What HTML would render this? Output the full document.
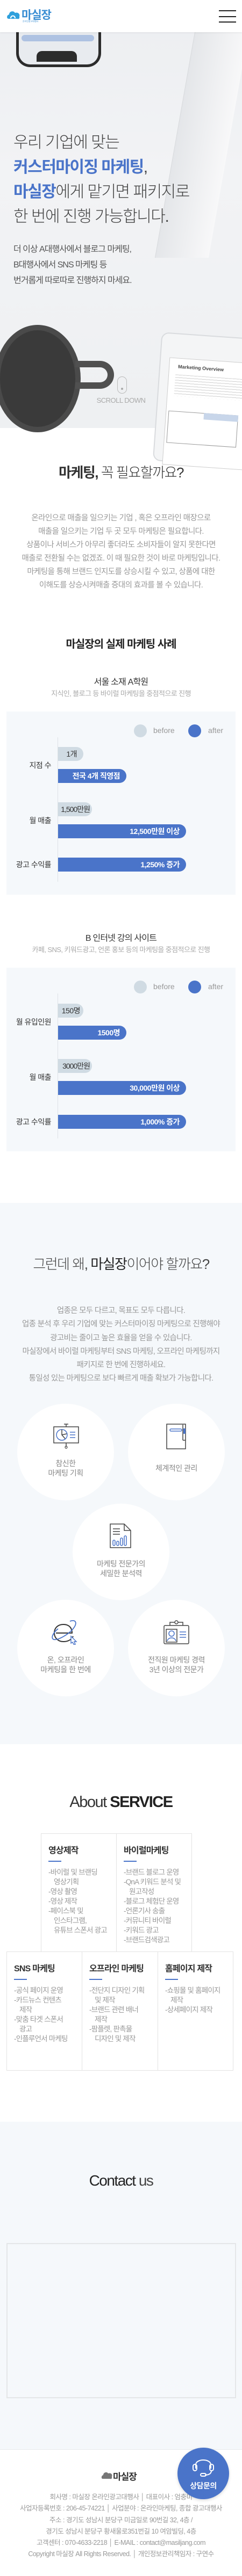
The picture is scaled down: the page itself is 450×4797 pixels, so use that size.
<!DOCTYPE html>
<html lang="ko">
<head>
<meta charset="utf-8">
<style>
*{margin:0;padding:0;box-sizing:border-box}
html,body{width:450px;height:4797px;overflow:hidden;background:#fff}
body{position:relative;font-family:"Liberation Sans","Noto Sans CJK KR",sans-serif;color:#333}
.a{position:absolute}
.c{position:absolute;left:0;width:450px;text-align:center}
.bar{position:absolute;left:108px;height:26px;border-radius:0 13px 13px 0;text-align:right;padding-right:12px;font-size:14px;line-height:26px;letter-spacing:-0.5px;white-space:nowrap}
.bf{background:#d0dbe3;color:#333}
.af{background:#4a74c9;color:#fff;font-weight:bold}
.lbl{position:absolute;width:95px;text-align:right;font-size:14px;color:#333;letter-spacing:-0.5px;white-space:nowrap}
.box{position:absolute;background:#f5f8fb}
.axis{position:absolute;left:107px;width:1px;background:#dde2e6}
.lg{position:absolute;font-size:14px;color:#999}
.dot{position:absolute;width:24px;height:24px;border-radius:50%}
.circ{position:absolute;width:180px;height:180px;border-radius:50%;background:#fff;text-align:center}
.circ .t{position:absolute;left:0;width:180px;font-size:14px;color:#888;line-height:18px;letter-spacing:-0.5px}
.circ svg{position:absolute}
.sv{position:absolute;border:1px solid #e3e3e3;background:#fff}
.sv h4{position:absolute;left:13px;font-size:16px;font-weight:bold;color:#333;letter-spacing:-0.8px;white-space:nowrap}
.sv i{position:absolute;left:13px;width:24px;height:2px;background:#4a74c9}
.sv ul{position:absolute;left:13px;list-style:none;font-size:13.5px;color:#999;line-height:18px;letter-spacing:-0.8px;white-space:nowrap}
.sv li{padding-left:7px;text-indent:-7px}
</style>
</head>
<body>

<!-- HERO BACKGROUND -->
<div class="a" style="left:0;top:0;width:450px;height:797px;background:linear-gradient(180deg,#eceef1 0%,#f2f3f5 40%,#eef0f2 100%)"></div>
<div class="a" style="left:30px;top:30px;width:158px;height:95px;border:5px solid #2c2c2c;border-top:none;border-radius:0 0 26px 26px;background:#e8ebef"></div>
<div class="a" style="left:40px;top:65px;width:135px;height:12px;background:#aec2e2;border-radius:6px"></div>
<div class="a" style="left:68px;top:95px;width:75px;height:20px;background:#2c2c2c;border-radius:10px 10px 0 0"></div>
<div class="a" style="left:362px;top:60px;width:100px;height:420px;background:linear-gradient(90deg,#e4e6e9,#f8f8f9);transform:skewX(-10deg);transform-origin:top left;border-left:1px solid #d6d8db"></div>
<div class="a" style="left:-10px;top:605px;width:160px;height:200px;border-radius:50%;background:#4a4a4a"></div>
<div class="a" style="left:0px;top:615px;width:140px;height:180px;border-radius:50%;background:#3a3a3a"></div>
<div class="a" style="left:140px;top:672px;width:72px;height:52px;border:12px solid #505050;border-left:none;border-radius:0 26px 26px 0"></div>
<div class="a" style="left:292px;top:625px;width:200px;height:240px;background:#f4f5f6;border-radius:14px;transform:rotate(4deg);border:2px solid #d9dbde">
  <div style="position:absolute;left:16px;top:44px;width:200px;height:200px;background:#fff;border:1px solid #ccc">
    <div style="position:absolute;left:16px;top:10px;font-size:9px;font-weight:bold;color:#444;font-family:'Liberation Sans',sans-serif">Marketing Overview</div>
    <div style="position:absolute;left:12px;top:30px;width:130px;height:40px;background:repeating-linear-gradient(180deg,#cfcfcf 0 1px,transparent 1px 5px)"></div>
    <div style="position:absolute;left:4px;top:98px;width:130px;height:60px;border:1px solid #999"></div>
    <div style="position:absolute;left:70px;top:98px;width:64px;height:12px;background:#c8d6ea"></div>
  </div>
</div>

<!-- HEADER -->
<div class="a" style="left:0;top:0;width:450px;height:60px;background:#fff;box-shadow:0 1px 3px rgba(0,0,0,.08)"></div>
<svg class="a" style="left:12px;top:17px" width="26" height="24" viewBox="0 0 26 24">
  <path d="M4 18 C0 18 0 11 5 10 C5 4 13 2 16 7 C21 5 26 9 24 14 C25 18 22 19 20 18 Z" fill="#2fa0dc"/>
  <path d="M8 17 C8 11 16 11 16 17" stroke="#fff" stroke-width="2" fill="none"/>
</svg>
<div class="a" style="left:40px;top:17px;font-size:21px;font-weight:bold;color:#3a8ed3;letter-spacing:-1px;line-height:24px">마실장</div>
<div class="a" style="left:42px;top:37px;font-size:4px;color:#3a8ed3">온라인광고대행사</div>
<div class="a" style="left:407px;top:19px;width:32px;height:2px;background:#222"></div>
<div class="a" style="left:407px;top:30px;width:32px;height:2px;background:#222"></div>
<div class="a" style="left:407px;top:40px;width:32px;height:2px;background:#222"></div>

<!-- HERO TEXT -->
<div class="a" style="left:25px;top:243px;font-size:30px;line-height:46px;color:#444;letter-spacing:-1.5px;font-weight:300;white-space:nowrap">
우리 기업에 맞는<br>
<span style="color:#4a74c9;font-weight:bold">커스터마이징 마케팅</span>,<br>
<span style="color:#4a74c9;font-weight:bold">마실장</span>에게 맡기면 패키지로<br>
한 번에 진행 가능합니다.
</div>
<div class="a" style="left:25px;top:450px;font-size:16px;line-height:29px;color:#555;letter-spacing:-1px;white-space:nowrap">
더 이상 A대행사에서 블로그 마케팅,<br>B대행사에서 SNS 마케팅 등<br>번거롭게 따로따로 진행하지 마세요.
</div>
<div class="a" style="left:218px;top:701px;width:18px;height:32px;border:1.5px solid #bbb;border-radius:9px"></div>
<div class="a" style="left:225px;top:722px;width:4px;height:4px;border-radius:50%;background:#aaa"></div>
<div class="c" style="top:738px;font-size:13px;color:#aaa;letter-spacing:-0.5px">SCROLL DOWN</div>

<!-- SECTION 2 -->
<div class="c" style="top:860px;font-size:26px;color:#333;letter-spacing:-1.5px;font-weight:300"><b style="font-weight:bold">마케팅,</b> 꼭 필요할까요?</div>
<div class="c" style="top:953px;font-size:14.5px;line-height:25px;color:#999;letter-spacing:-0.6px;white-space:nowrap">
온라인으로 매출을 일으키는 기업 , 혹은 오프라인 매장으로<br>
매출을 일으키는 기업 두 곳 모두 마케팅은 필요합니다.<br>
상품이나 서비스가 아무리 좋더라도 소비자들이 알지 못한다면<br>
매출로 전환될 수는 없겠죠. 이 때 필요한 것이 바로 마케팅입니다.<br>
마케팅을 통해 브랜드 인지도를 상승시킬 수 있고, 상품에 대한<br>
이해도를 상승시켜매출 증대의 효과를 볼 수 있습니다.
</div>

<div class="c" style="top:1183px;font-size:20px;font-weight:bold;color:#222;letter-spacing:-1px">마실장의 실제 마케팅 사례</div>

<!-- CASE A -->
<div class="c" style="top:1256px;font-size:16px;color:#333;letter-spacing:-0.8px">서울 소재 A학원</div>
<div class="c" style="top:1281px;font-size:13px;color:#aaa;letter-spacing:-0.6px">지식인, 블로그 등 바이럴 마케팅을 중점적으로 진행</div>
<div class="box" style="left:12px;top:1325px;width:426px;height:341px"></div>
<div class="dot" style="left:249px;top:1349px;background:#d0dbe3"></div>
<div class="lg" style="left:285px;top:1352px">before</div>
<div class="dot" style="left:350px;top:1349px;background:#4a74c9"></div>
<div class="lg" style="left:387px;top:1352px">after</div>
<div class="axis" style="top:1373px;height:269px"></div>
<div class="bar bf" style="top:1391px;width:47px">1개</div>
<div class="bar af" style="top:1432px;width:127px">전국 4개 직영점</div>
<div class="lbl" style="top:1415px">지점 수</div>
<div class="bar bf" style="top:1494px;width:63px;padding-right:4px;letter-spacing:-1px">1,500만원</div>
<div class="bar af" style="top:1535px;width:238px">12,500만원 이상</div>
<div class="lbl" style="top:1518px">월 매출</div>
<div class="bar af" style="top:1597px;width:238px">1,250% 증가</div>
<div class="lbl" style="top:1600px">광고 수익률</div>

<!-- CASE B -->
<div class="c" style="top:1733px;font-size:16px;color:#333;letter-spacing:-0.8px">B 인터넷 강의 사이트</div>
<div class="c" style="top:1758px;font-size:13px;color:#aaa;letter-spacing:-0.6px">카페, SNS, 키워드광고, 언론 홍보 등의 마케팅을 중점적으로 진행</div>
<div class="box" style="left:12px;top:1802px;width:426px;height:342px"></div>
<div class="dot" style="left:249px;top:1826px;background:#d0dbe3"></div>
<div class="lg" style="left:285px;top:1829px">before</div>
<div class="dot" style="left:350px;top:1826px;background:#4a74c9"></div>
<div class="lg" style="left:387px;top:1829px">after</div>
<div class="axis" style="top:1850px;height:270px"></div>
<div class="bar bf" style="top:1869px;width:47px;padding-right:6px">150명</div>
<div class="bar af" style="top:1910px;width:127px">1500명</div>
<div class="lbl" style="top:1893px">월 유입인원</div>
<div class="bar bf" style="top:1972px;width:63px;padding-right:4px;letter-spacing:-1px">3000만원</div>
<div class="bar af" style="top:2013px;width:238px">30,000만원 이상</div>
<div class="lbl" style="top:1996px">월 매출</div>
<div class="bar af" style="top:2076px;width:238px">1,000% 증가</div>
<div class="lbl" style="top:2079px">광고 수익률</div>

<!-- WHY SECTION -->
<div class="a" style="left:0;top:2240px;width:450px;height:1008px;background:#f5f8fb"></div>
<div class="c" style="top:2334px;font-size:26px;color:#444;letter-spacing:-1.5px;font-weight:300">그런데 왜, <b style="color:#222">마실장</b>이어야 할까요?</div>
<div class="c" style="top:2429px;font-size:14.5px;line-height:25.3px;color:#999;letter-spacing:-0.7px;white-space:nowrap">
업종은 모두 다르고, 목표도 모두 다릅니다.<br>
업종 분석 후 우리 기업에 맞는 커스터마이징 마케팅으로 진행해야<br>
광고비는 줄이고 높은 효율을 얻을 수 있습니다.<br>
마실장에서 바이럴 마케팅부터 SNS 마케팅, 오프라인 마케팅까지<br>
패키지로 한 번에 진행하세요.<br>
통일성 있는 마케팅으로 보다 빠르게 매출 확보가 가능합니다.
</div>

<div class="circ" style="left:32px;top:2614px">
  <svg style="left:66px;top:36px" width="50" height="48" viewBox="0 0 50 48">
    <line x1="25" y1="2" x2="25" y2="7" stroke="#444" stroke-width="1.5"/><line x1="21" y1="2" x2="29" y2="2" stroke="#444" stroke-width="1.5"/>
    <rect x="2" y="7" width="46" height="30" fill="none" stroke="#444" stroke-width="1.5"/>
    <line x1="25" y1="37" x2="25" y2="44" stroke="#444" stroke-width="1.5"/><circle cx="25" cy="45" r="2" fill="none" stroke="#444" stroke-width="1.2"/>
    <circle cx="17" cy="22" r="10" fill="none" stroke="#4a74c9" stroke-width="1.5"/>
    <path d="M17 12 L17 22 L23 29" fill="none" stroke="#444" stroke-width="1.5"/><path d="M17 22 L26 20" stroke="#444" stroke-width="1.5"/>
    <line x1="32" y1="17" x2="42" y2="17" stroke="#4a74c9" stroke-width="1.5"/><line x1="32" y1="22" x2="42" y2="22" stroke="#4a74c9" stroke-width="1.5"/><line x1="32" y1="27" x2="42" y2="27" stroke="#4a74c9" stroke-width="1.5"/>
  </svg>
  <div class="t" style="top:102px">참신한<br>마케팅 기획</div>
</div>
<div class="circ" style="left:238px;top:2614px">
  <svg style="left:70px;top:36px" width="40" height="50" viewBox="0 0 40 50">
    <rect x="2" y="2" width="35" height="46" fill="none" stroke="#444" stroke-width="1.5"/>
    <rect x="8" y="11" width="22" height="4" rx="2" fill="none" stroke="#4a74c9" stroke-width="1.5"/>
    <rect x="33" y="10" width="4" height="10" fill="#4a74c9"/>
    <line x1="32" y1="3" x2="32" y2="32" stroke="#444" stroke-width="1.5"/><line x1="32" y1="32" x2="37" y2="32" stroke="#444" stroke-width="1.5"/>
  </svg>
  <div class="t" style="top:111px">체계적인 관리</div>
</div>
<div class="circ" style="left:135px;top:2800px">
  <svg style="left:68px;top:36px" width="42" height="48" viewBox="0 0 42 48">
    <path d="M2 2 L28 2 L40 14 L40 46 L2 46 Z" fill="none" stroke="#444" stroke-width="1.5"/>
    <path d="M28 2 L28 14 L40 14" fill="none" stroke="#444" stroke-width="1.5"/>
    <line x1="7" y1="11" x2="20" y2="11" stroke="#444" stroke-width="1.5"/><line x1="7" y1="16" x2="20" y2="16" stroke="#444" stroke-width="1.5"/><line x1="7" y1="21" x2="20" y2="21" stroke="#444" stroke-width="1.5"/>
    <rect x="7" y="32" width="4" height="10" rx="2" fill="none" stroke="#4a74c9" stroke-width="1.5"/><rect x="14" y="34" width="4" height="8" rx="2" fill="none" stroke="#4a74c9" stroke-width="1.5"/><rect x="21" y="28" width="4" height="14" rx="2" fill="none" stroke="#4a74c9" stroke-width="1.5"/><rect x="28" y="24" width="4" height="18" rx="2" fill="none" stroke="#4a74c9" stroke-width="1.5"/>
  </svg>
  <div class="t" style="top:103px">마케팅 전문가의<br>세밀한 분석력</div>
</div>
<div class="circ" style="left:32px;top:2979px">
  <svg style="left:64px;top:36px" width="52" height="48" viewBox="0 0 52 48">
    <path d="M40 32 C36 40 28 42 22 42 C12 42 5 35 5 26 C5 16 12 10 22 10 C32 10 38 16 38 26 L8 26" fill="none" stroke="#333" stroke-width="2"/>
    <path d="M34 4 C46 0 48 8 40 18 C32 28 12 40 4 38 C-2 36 2 26 12 18" fill="none" stroke="#4a74c9" stroke-width="1.8"/>
    <path d="M36 32 L46 42 L42 42 L44 47 L41 47 L39 43 L36 45 Z" fill="#fff" stroke="#4a74c9" stroke-width="1.4"/>
  </svg>
  <div class="t" style="top:103px">온, 오프라인<br>마케팅을 한 번에</div>
</div>
<div class="circ" style="left:238px;top:2979px">
  <svg style="left:65px;top:36px" width="50" height="48" viewBox="0 0 50 48">
    <rect x="2" y="12" width="46" height="34" rx="2" fill="none" stroke="#444" stroke-width="1.5"/>
    <path d="M13 12 L13 6 L37 6 L37 12" fill="none" stroke="#444" stroke-width="1.5"/><circle cx="25" cy="6" r="3" fill="#fff" stroke="#444" stroke-width="1.4"/>
    <rect x="6" y="19" width="20" height="24" fill="none" stroke="#444" stroke-width="1.5"/>
    <circle cx="16" cy="27" r="5" fill="none" stroke="#4a74c9" stroke-width="1.5"/><path d="M8 41 C9 33 23 33 24 41" fill="none" stroke="#4a74c9" stroke-width="1.5"/>
    <line x1="31" y1="24" x2="43" y2="24" stroke="#4a74c9" stroke-width="1.5"/><line x1="31" y1="29" x2="43" y2="29" stroke="#4a74c9" stroke-width="1.5"/><line x1="31" y1="34" x2="43" y2="34" stroke="#4a74c9" stroke-width="1.5"/>
  </svg>
  <div class="t" style="top:103px">전직원 마케팅 경력<br>3년 이상의 전문가</div>
</div>

<!-- ABOUT SERVICE -->
<div class="c" style="top:3340px;font-size:29px;color:#222;letter-spacing:-1.5px"><span style="font-weight:300;color:#333">About</span> <b style="font-weight:bold">SERVICE</b></div>

<div class="sv" style="left:76px;top:3414px;width:141px;height:221px">
  <h4 style="top:17px">영상제작</h4><i style="top:50px"></i>
  <ul style="top:63px"><li>-바이럴 및 브랜딩<br>&nbsp;영상기획</li><li>-영상 촬영</li><li>-영상 제작</li><li>-페이스북 및<br>&nbsp;인스타그램,<br>&nbsp;유튜브 스폰서 광고</li></ul>
</div>
<div class="sv" style="left:216px;top:3414px;width:141px;height:221px">
  <h4 style="top:17px">바이럴마케팅</h4><i style="top:50px"></i>
  <ul style="top:63px"><li>-브랜드 블로그 운영</li><li>-QnA 키워드 분석 및<br>&nbsp;원고작성</li><li>-블로그 체험단 운영</li><li>-언론기사 송출</li><li>-커뮤니티 바이럴</li><li>-키워드 광고</li><li>-브랜드검색광고</li></ul>
</div>
<div class="sv" style="left:12px;top:3634px;width:141px;height:222px">
  <h4 style="top:17px">SNS 마케팅</h4><i style="top:50px"></i>
  <ul style="top:63px"><li>-공식 페이지 운영</li><li>-카드뉴스 컨텐츠<br>&nbsp;제작</li><li>-맞춤 타겟 스폰서<br>&nbsp;광고</li><li>-인플루언서 마케팅</li></ul>
</div>
<div class="sv" style="left:152px;top:3634px;width:142px;height:222px">
  <h4 style="top:17px">오프라인 마케팅</h4><i style="top:50px"></i>
  <ul style="top:63px"><li>-전단지 디자인 기획<br>&nbsp;및 제작</li><li>-브랜드 관련 배너<br>&nbsp;제작</li><li>-팜플렛, 판촉물<br>&nbsp;디자인 및 제작</li></ul>
</div>
<div class="sv" style="left:293px;top:3634px;width:141px;height:222px">
  <h4 style="top:17px">홈페이지 제작</h4><i style="top:50px"></i>
  <ul style="top:63px"><li>-쇼핑몰 및 홈페이지<br>&nbsp;제작</li><li>-상세페이지 제작</li></ul>
</div>

<!-- CONTACT -->
<div class="a" style="left:0;top:3951px;width:450px;height:611px;background:#f5f8fb"></div>
<div class="c" style="top:4045px;font-size:28px;color:#222;letter-spacing:-1.5px">Contact <span style="font-weight:300;color:#444">us</span></div>
<div class="a" style="left:12px;top:4177px;width:427px;height:289px;border:2px solid #e4e6e8;background:#f5f8fb"></div>

<!-- FOOTER -->
<div class="a" style="left:0;top:4561px;width:450px;height:1px;background:#e8eaec"></div>
<svg class="a" style="left:188px;top:4600px" width="22" height="20" viewBox="0 0 22 20">
  <path d="M3 16 C0 16 0 10 4 9 C4 4 11 2 13 6 C18 4 22 8 20 12 C21 16 18 17 17 16 Z" fill="#777"/>
</svg>
<div class="a" style="left:210px;top:4598px;font-size:17px;font-weight:bold;color:#333;letter-spacing:-1px">마실장</div>
<div class="c" style="top:4640px;font-size:12.5px;line-height:21.3px;color:#999;letter-spacing:-0.5px;white-space:nowrap">
회사명 : 마실장 온라인광고대행사 │ 대표이사 : 엄충미<br>
사업자등록번호 : 206-45-74221 │ 사업분야 : 온라인마케팅, 종합 광고대행사<br>
주소 : 경기도 성남시 분당구 미금일로 90번길 32, 4층 /<br>
경기도 성남시 분당구 황새울로351번길 10 여암빌딩, 4층<br>
고객센터 : 070-4633-2218 │ E-MAIL : contact@masiljang.com<br>
Copyright 마실장 All Rights Reserved. │ 개인정보관리책임자 : 구연수
</div>

<!-- FLOATING BUTTON -->
<div class="a" style="left:330px;top:4558px;width:96px;height:96px;border-radius:50%;background:#4a74c9;box-shadow:0 2px 6px rgba(0,0,0,.15)"></div>
<svg class="a" style="left:355px;top:4573px" width="46" height="42" viewBox="0 0 46 42">
  <path d="M9 24 L9 17 C9 5 37 5 37 17 L37 24" fill="none" stroke="#fff" stroke-width="2"/>
  <rect x="4" y="16" width="7" height="12" rx="3.5" fill="none" stroke="#fff" stroke-width="2"/>
  <rect x="35" y="16" width="7" height="12" rx="3.5" fill="none" stroke="#fff" stroke-width="2"/>
  <path d="M38 28 C38 34 32 36 26 36" fill="none" stroke="#fff" stroke-width="2"/>
  <rect x="18" y="33" width="10" height="5" rx="2.5" fill="none" stroke="#fff" stroke-width="2"/>
</svg>
<div class="a" style="left:330px;top:4619px;width:96px;text-align:center;font-size:14px;font-weight:bold;color:#fff;letter-spacing:-0.5px">상담문의</div>

</body>
</html>
